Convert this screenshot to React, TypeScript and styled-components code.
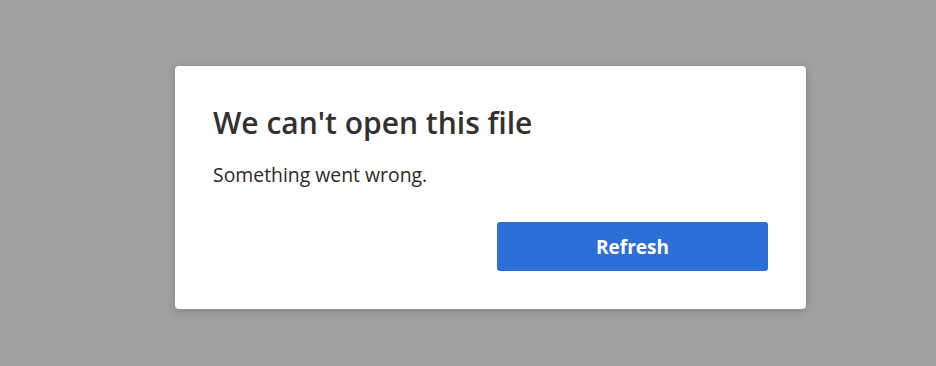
import React from "react";
import styled, { createGlobalStyle } from "styled-components";

const Global = createGlobalStyle`
  html, body { margin: 0; padding: 0; }
  body {
    background: #a19fa1;
    font-family: "Open Sans", "Noto Sans", sans-serif;
    width: 936px;
    height: 366px;
    overflow: hidden;
  }
`;

const Page = styled.div`
  display: flex;
  align-items: flex-start;
  padding: 66px 0 0 175px;
  height: 366px;
  box-sizing: border-box;
`;

const Card = styled.div`
  width: 631px;
  height: 243px;
  box-sizing: border-box;
  background: #ffffff;
  border-radius: 4px;
  box-shadow: 0 2px 8px rgba(0, 0, 0, 0.18);
  padding: 37px 38px 38px 38px;
  display: flex;
  flex-direction: column;
`;

const Title = styled.h1`
  margin: 0;
  font-size: 30px;
  font-weight: 600;
  line-height: 40px;
  color: #323130;
`;

const Message = styled.p`
  margin: 19px 0 0 0;
  font-size: 19.4px;
  line-height: 26px;
  color: #2a2a2a;
`;

const Actions = styled.div`
  margin-top: auto;
  display: flex;
  justify-content: flex-end;
`;

const PrimaryButton = styled.button`
  width: 271px;
  height: 49px;
  border: none;
  border-radius: 3px;
  background: #2b6fd6;
  color: #ffffff;
  font-family: inherit;
  font-size: 19px;
  font-weight: 700;
  cursor: pointer;
`;

export default function App() {
  return (
    <>
      <Global />
      <Page>
        <Card>
          <Title>We can't open this file</Title>
          <Message>Something went wrong.</Message>
          <Actions>
            <PrimaryButton>Refresh</PrimaryButton>
          </Actions>
        </Card>
      </Page>
    </>
  );
}
